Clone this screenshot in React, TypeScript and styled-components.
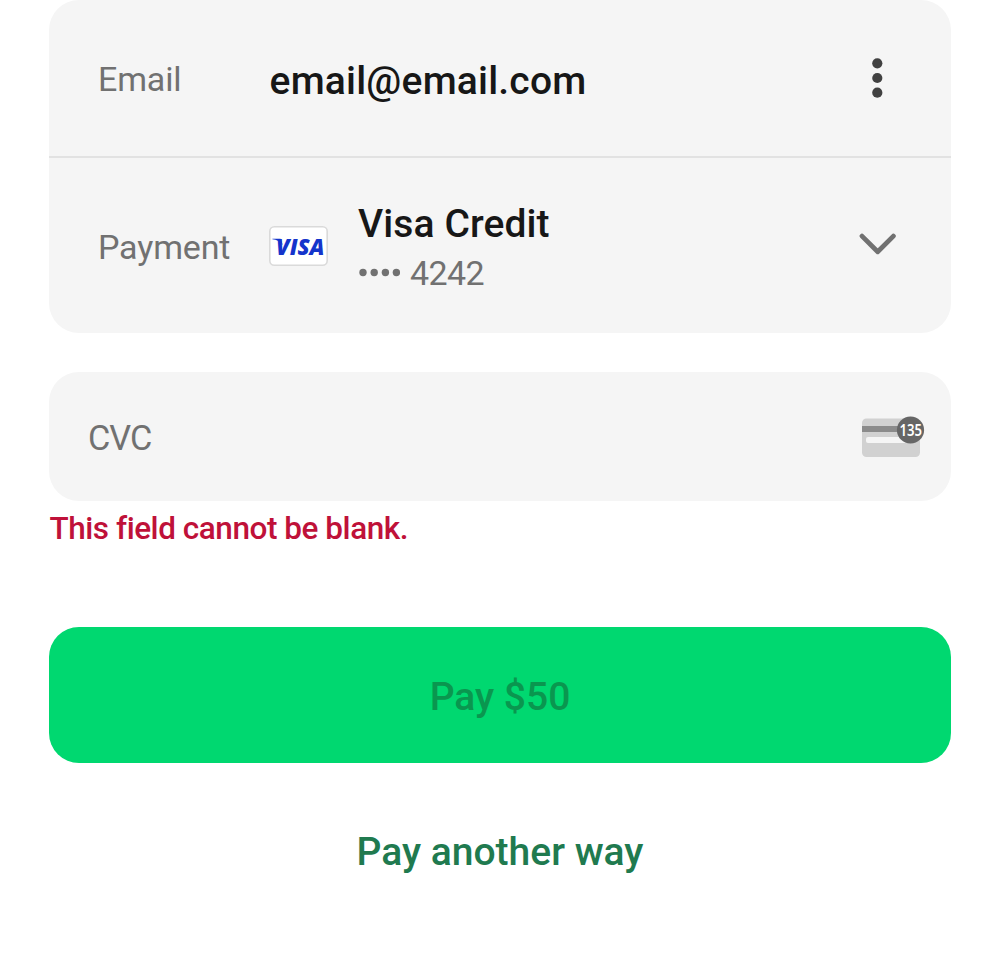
import React from "react";
import styled, { createGlobalStyle } from "styled-components";

const GlobalStyle = createGlobalStyle`
  * { box-sizing: border-box; }
  body {
    margin: 0;
    background: #ffffff;
    font-family: Roboto, "Liberation Sans", sans-serif;
  }
  button { font-family: inherit; border: 0; padding: 0; background: none; }
`;

const Page = styled.main`
  display: flex;
  flex-direction: column;
  height: 967px;
  padding: 0 49px;
  overflow: hidden;
`;

const DetailsCard = styled.section`
  background: #f5f5f5;
  border-radius: 30px;
`;

const DetailRow = styled.div<{ $height: number; $divided?: boolean }>`
  display: flex;
  align-items: center;
  height: ${(p) => p.$height}px;
  padding: 0 55px 0 49px;
  border-bottom: ${(p) => (p.$divided ? "2px solid #e2e2e2" : "0")};
`;

const RowLabel = styled.span<{ $raised?: boolean }>`
  width: 171px;
  flex: none;
  font-size: 34px;
  line-height: 48px;
  letter-spacing: -0.15px;
  color: #717171;
  padding-top: ${(p) => (p.$raised ? 2 : 3)}px;
`;

const EmailValue = styled.span`
  flex: 1;
  font-size: 39px;
  font-weight: 500;
  line-height: 48px;
  letter-spacing: 0.2px;
  color: #171717;
  padding: 5px 0 0 0.6px;
`;

const PaymentMethod = styled.div`
  flex: 1;
  display: flex;
  align-items: center;
  gap: 30px;
`;

const MethodText = styled.div`
  display: flex;
  flex-direction: column;
  padding-top: 6px;
`;

const MethodName = styled.span`
  font-size: 39px;
  font-weight: 500;
  line-height: 49px;
  letter-spacing: 0.1px;
  color: #171717;
`;

const MethodNumber = styled.span`
  display: flex;
  align-items: center;
  gap: 10px;
  font-size: 34px;
  line-height: 48px;
  letter-spacing: -0.6px;
  color: #717171;
`;

const IconButton = styled.button`
  display: flex;
  align-items: center;
  justify-content: center;
  width: 37px;
  height: 48px;
`;

const ChevronButton = styled(IconButton)`
  padding-bottom: 3px;
`;

const CvcField = styled.label`
  display: flex;
  align-items: center;
  justify-content: space-between;
  height: 128.5px;
  margin-top: 39px;
  padding: 0 26px 0 39px;
  background: #f5f5f5;
  border-radius: 30px;
`;

const Placeholder = styled.span`
  font-size: 34.3px;
  line-height: 48px;
  letter-spacing: -1px;
  color: #717171;
  padding-top: 4px;
`;

const ErrorText = styled.p`
  margin: 8.5px 0 0 0.5px;
  font-size: 31.5px;
  font-weight: 500;
  line-height: 40px;
  letter-spacing: -0.46px;
  color: #bf1139;
`;

const PayButton = styled.button`
  height: 136px;
  margin-top: 77.5px;
  border-radius: 30px;
  background: #00d870;
  color: #0a964f;
  font-size: 39px;
  font-weight: 500;
  padding-top: 4px;
`;

const AltButton = styled.button`
  align-self: center;
  margin-top: 64px;
  font-size: 39px;
  font-weight: 500;
  line-height: 50px;
  color: #207a4f;
`;

const VisaBadge = () => (
  <svg width="59" height="40" viewBox="0 0 59 40" aria-label="Visa">
    <rect x="0.8" y="0.8" width="57.4" height="38.4" rx="4.5" fill="#fff" stroke="#dadada" strokeWidth="1.6" />
    <path d="M3.4 12.8h8.1l2.3 6.2C11.6 15.600 7.500 13.800 3.400 13.300Z" fill="#1434cb" />
    <text
      x="7"
      y="28.9"
      textLength="48.5"
      lengthAdjust="spacingAndGlyphs"
      fontFamily="Open Sans, sans-serif"
      fontSize="22.3"
      fontWeight="800"
      fontStyle="italic"
      fill="#1434cb"
    >
      VISA
    </text>
  </svg>
);

const MaskDots = () => (
  <svg width="42" height="10" viewBox="0 0 42 10" aria-hidden="true">
    {[5, 16.2, 27.4, 38.4].map((x) => (
      <circle key={x} cx={x} cy="4.5" r="3.7" fill="#717171" />
    ))}
  </svg>
);

const MoreIcon = () => (
  <svg width="12" height="42" viewBox="0 0 12 42" aria-hidden="true">
    {[6.3, 21, 35.7].map((y) => (
      <circle key={y} cx="5.3" cy={y} r="5.1" fill="#414141" />
    ))}
  </svg>
);

const ChevronIcon = () => (
  <svg width="37" height="22" viewBox="0 0 37 22" fill="none" aria-hidden="true">
    <path d="M3 3.1 18.7 18.7 34.4 3.1" stroke="#717171" strokeWidth="4.8" strokeLinecap="round" strokeLinejoin="round" />
  </svg>
);

const CvcCardIcon = () => (
  <svg width="64" height="44" viewBox="0 0 64 44" aria-hidden="true">
    <rect x="1" y="4.5" width="58" height="38.5" rx="4.5" fill="#d1d1d1" />
    <rect x="1" y="12" width="58" height="6" fill="#8b8b8b" />
    <rect x="5" y="23" width="46" height="6" rx="2" fill="#f5f5f5" />
    <circle cx="49.5" cy="16" r="13.6" fill="#666" />
    <text x="38.5" y="21.6" textLength="22.5" lengthAdjust="spacingAndGlyphs" fontFamily="Noto Sans, sans-serif" fontSize="15.5" fontWeight="600" fill="#fff">
      135
    </text>
  </svg>
);

export default function App() {
  return (
    <>
      <GlobalStyle />
      <Page>
        <DetailsCard>
          <DetailRow $height={158} $divided>
            <RowLabel $raised>Email</RowLabel>
            <EmailValue>email@email.com</EmailValue>
            <IconButton aria-label="More options">
              <MoreIcon />
            </IconButton>
          </DetailRow>
          <DetailRow $height={175}>
            <RowLabel>Payment</RowLabel>
            <PaymentMethod>
              <VisaBadge />
              <MethodText>
                <MethodName>Visa Credit</MethodName>
                <MethodNumber>
                  <MaskDots />
                  4242
                </MethodNumber>
              </MethodText>
            </PaymentMethod>
            <ChevronButton aria-label="Change payment method">
              <ChevronIcon />
            </ChevronButton>
          </DetailRow>
        </DetailsCard>
        <CvcField>
          <Placeholder>CVC</Placeholder>
          <CvcCardIcon />
        </CvcField>
        <ErrorText>This field cannot be blank.</ErrorText>
        <PayButton disabled>Pay $50</PayButton>
        <AltButton>Pay another way</AltButton>
      </Page>
    </>
  );
}
